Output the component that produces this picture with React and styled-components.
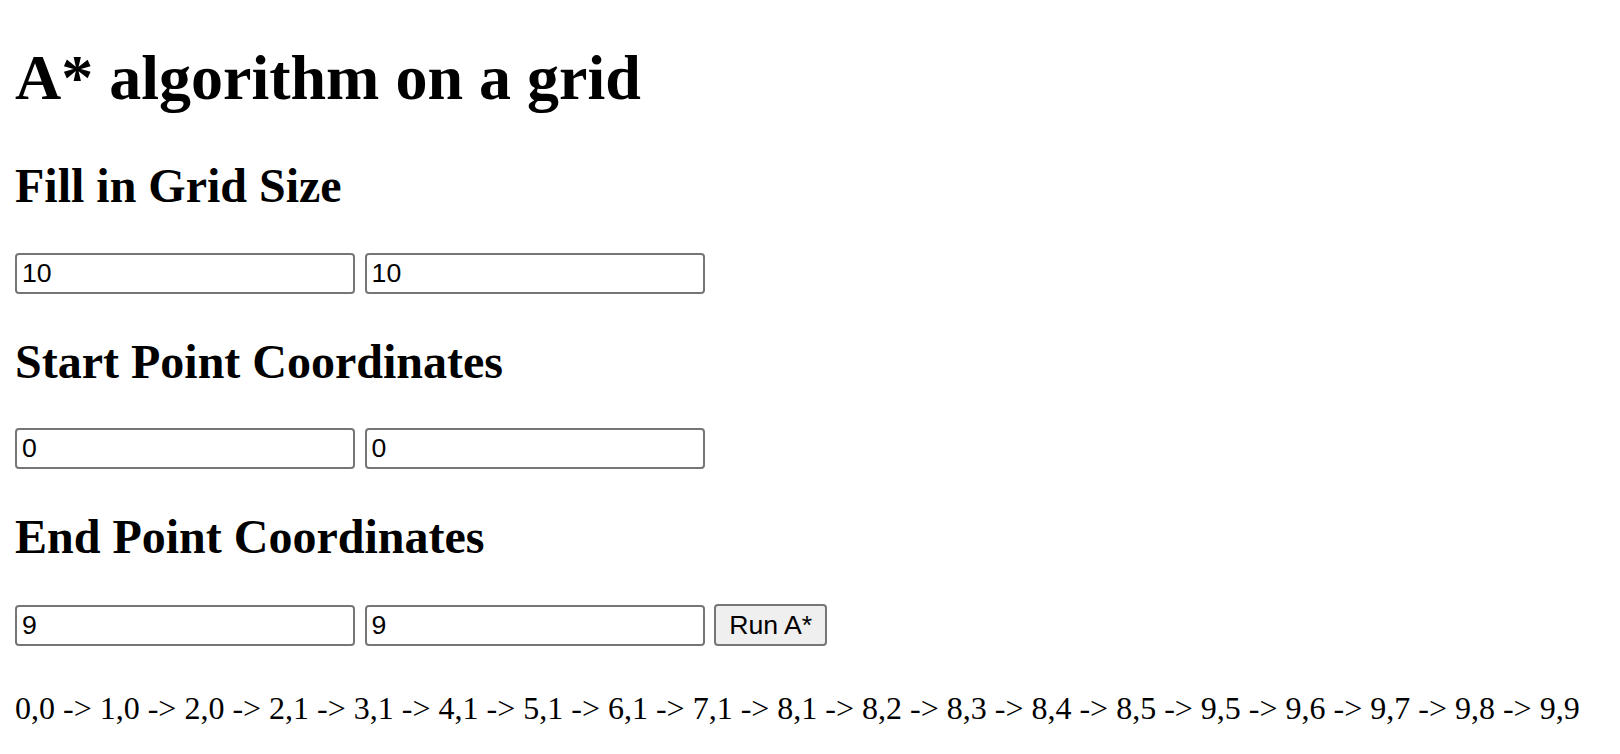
import React, { useState } from "react";
import styled, { createGlobalStyle } from "styled-components";

const GlobalStyle = createGlobalStyle`
  body {
    margin: 16px 15px;
    background: #ffffff;
    color: #000000;
    font-family: "Liberation Serif", "Times New Roman", serif;
    font-size: 32px;
  }
`;

const Title = styled.h1`
  font-size: 64px;
  font-weight: bold;
  margin: 25px 0 42.88px;
`;

const SectionTitle = styled.h2`
  font-size: 48px;
  font-weight: bold;
  margin: 39.84px 0;
`;

const InputRow = styled.div`
  display: flex;
  align-items: center;
  gap: 9.6px;
`;

const Field = styled.input`
  font-family: "Liberation Sans", Arial, sans-serif;
  font-size: 26.67px;
  width: 340px;
  height: 41px;
  box-sizing: border-box;
  padding: 2px 5px;
  border: 2px solid #767676;
  border-radius: 4px;
  color: #000;
  background: #fff;
`;

const RunButton = styled.button`
  font-family: "Liberation Sans", Arial, sans-serif;
  font-size: 26.67px;
  height: 42px;
  box-sizing: border-box;
  padding: 2px 13px;
  border: 2px solid #767676;
  border-radius: 4px;
  background: #efefef;
  color: #000;
`;

const PathText = styled.p`
  margin: 44px 0 32px;
`;

const path = [
  [0, 0], [1, 0], [2, 0], [2, 1], [3, 1], [4, 1], [5, 1], [6, 1], [7, 1],
  [8, 1], [8, 2], [8, 3], [8, 4], [8, 5], [9, 5], [9, 6], [9, 7], [9, 8], [9, 9],
];

const App = () => {
  const [size, setSize] = useState(["10", "10"]);
  const [start, setStart] = useState(["0", "0"]);
  const [end, setEnd] = useState(["9", "9"]);

  const update = (setter, values, i) => (e) => {
    const next = [...values];
    next[i] = e.target.value;
    setter(next);
  };

  return (
    <>
      <GlobalStyle />
      <Title>A* algorithm on a grid</Title>
      <SectionTitle>Fill in Grid Size</SectionTitle>
      <InputRow>
        <Field value={size[0]} onChange={update(setSize, size, 0)} />
        <Field value={size[1]} onChange={update(setSize, size, 1)} />
      </InputRow>
      <SectionTitle>Start Point Coordinates</SectionTitle>
      <InputRow>
        <Field value={start[0]} onChange={update(setStart, start, 0)} />
        <Field value={start[1]} onChange={update(setStart, start, 1)} />
      </InputRow>
      <SectionTitle>End Point Coordinates</SectionTitle>
      <InputRow>
        <Field value={end[0]} onChange={update(setEnd, end, 0)} />
        <Field value={end[1]} onChange={update(setEnd, end, 1)} />
        <RunButton>Run A*</RunButton>
      </InputRow>
      <PathText>{path.map(([x, y]) => `${x},${y}`).join(" -> ")}</PathText>
    </>
  );
};

export default App;
